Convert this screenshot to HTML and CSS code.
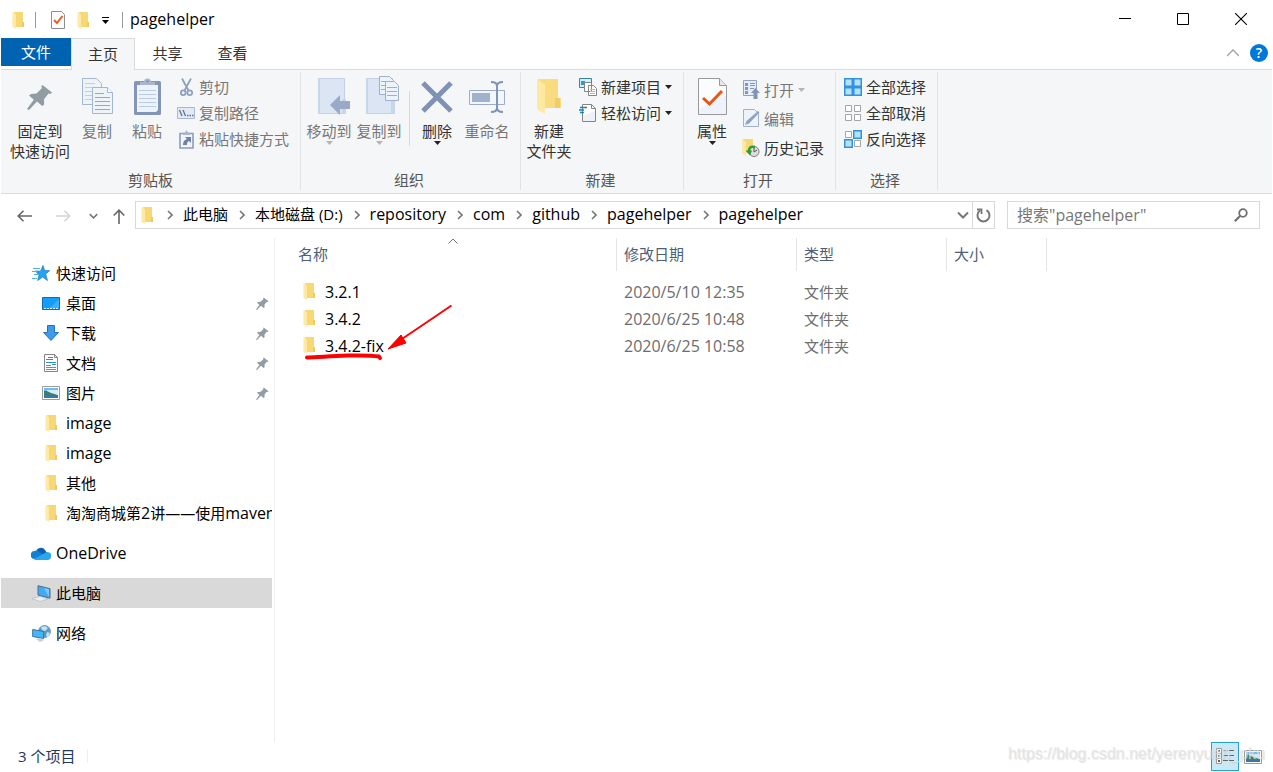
FILE: index.html
```html
<!DOCTYPE html>
<html lang="zh-CN">
<head>
<meta charset="utf-8">
<title>pagehelper</title>
<link rel="stylesheet" href="styles.css">
</head>
<body>
<svg class="defs" aria-hidden="true">
  <symbol id="folder" viewBox="0 0 12 17"><path fill="#f8d775" d="M2 0h9v10h1v5H3z"/><path fill="#f0c95f" d="M10 10h2v5h-2z"/><path fill="#ffe9a6" d="M0 0l4 2.500V17L0 14.500z"/><path fill="#fff3cc" d="M0 0h1v15l-1-.6z"/></symbol>
  <symbol id="pin" viewBox="0 0 26 26"><path fill="#919ca3" d="M15.500 1l9.500 7.500-1.500 1.500-2-.4-4.500 5.600.2 5.300-2 1.500-5.200-4.400L2 26l-2-1 6.800-9.200L2 11.600 4 10l5.500-.5 5.500-5.500-.8-1.500z"/></symbol>
  <symbol id="crumb" viewBox="0 0 6 10"><path fill="none" stroke="#777" stroke-width="1.600" d="M1 1l4 4-4 4"/></symbol>
  <symbol id="down" viewBox="0 0 12 8"><path fill="none" stroke="#777" stroke-width="2" d="M1 1.500l5 5 5-5"/></symbol>
  <symbol id="caret" viewBox="0 0 7 4"><path fill="currentColor" d="M0 0h7L3.500 4z"/></symbol>
  <symbol id="picture" viewBox="0 0 18 14"><path fill="#fff" stroke="#9b9b9b" d="M.5.5h17v13H.5z"/><path fill="#6fbdf0" d="M2 2h14v4H2z"/><path fill="#d4edf7" d="M5 4h11v4H5z"/><path fill="#3e7d6c" d="M2 5h3l4 2 7 2v1H2z"/><path fill="#3478ad" d="M2 9h14v3H2z"/></symbol>
</svg>

<header class="titlebar">
  <div class="quick">
    <svg class="i-folder"><use href="#folder"/></svg>
    <span class="bar"></span>
    <button class="plain q-check" aria-label="属性"><svg width="14" height="18" viewBox="0 0 14 18"><path fill="#fbfcfd" stroke="#8e8e8e" d="M.5.5h10l3 3v14H.5z"/><path fill="none" stroke="#f05a1d" stroke-width="2" d="M3 9l3 3 5.500-7"/></svg></button>
    <button class="plain" aria-label="新建文件夹"><svg class="i-folder"><use href="#folder"/></svg></button>
    <button class="plain q-more" aria-label="自定义"><svg width="7" height="7" viewBox="0 0 7 7"><path d="M0 0h7v1H0zM0 3h7L3.500 7z"/></svg></button>
    <span class="bar"></span>
  </div>
  <h1 class="title">pagehelper</h1>
  <div class="winctl">
    <button class="plain" aria-label="最小化"><svg width="12" height="12"><path d="M0 5h12v1H0z"/></svg></button>
    <button class="plain" aria-label="最大化"><svg width="12" height="12"><path fill="none" stroke="#000" d="M.5.5h11v11H.5z"/></svg></button>
    <button class="plain" aria-label="关闭"><svg width="12" height="12"><path fill="none" stroke="#000" stroke-width="1.100" d="M0 0l12 12M12 0L0 12"/></svg></button>
  </div>
</header>

<nav class="tabs">
  <button class="tab file">文件</button>
  <button class="tab active">主页</button>
  <button class="tab">共享</button>
  <button class="tab">查看</button>
  <div class="tabs-end">
    <button class="plain" aria-label="最小化功能区"><svg width="12" height="8"><path fill="none" stroke="#a0a0a0" stroke-width="1.300" d="M0 7l6-6 6 6"/></svg></button>
    <button class="plain help" aria-label="帮助">?</button>
  </div>
</nav>

<section class="ribbon">
  <div class="group g-clip">
    <div class="tools">
      <button class="big wide"><span class="pic"><svg width="26" height="26"><use href="#pin"/></svg></span>固定到<br>快速访问</button>
      <button class="big off"><span class="pic"><svg width="31" height="37" viewBox="0 0 31 37"><g fill="#eef3fa" stroke="#a4b6d3"><path d="M.5.5h14l5 5v21H.5z"/><path fill="none" stroke="#c1cfe5" d="M3 5.500h10M3 9.500h14M3 13.500h14M3 17.500h14M3 21.500h14"/><path d="M10.500 9.500h15l5 5v21h-20z"/><path fill="#fff" d="M25.500 9.500v5h5"/><path fill="none" stroke="#93a7c8" d="M13 15.500h9M13 19.500h15M13 23.500h15M13 27.500h15M13 31.500h15"/></g></svg></span>复制</button>
      <button class="big paste off"><span class="pic"><svg width="27" height="37" viewBox="0 0 27 37"><rect y="3" width="27" height="34" rx="1.500" fill="#8496b8"/><path fill="#edf3fa" d="M3 7h21v25l-2 2H3z"/><path stroke="#bccbe1" d="M5 12.500h17M5 16.500h17M5 20.500h17M5 24.500h17M5 28.500h17"/><path fill="#a9b6ce" d="M6 7V4h4a3.500 3.500 0 0 1 7 0h4v3z"/><circle cx="13.500" cy="3.500" r="1.300" fill="#8496b8"/></svg></span>粘贴</button>
      <div class="small">
        <button class="line off"><span class="ico"><svg width="13" height="19" viewBox="0 0 13 19"><g fill="none" stroke="#8ea0bf"><path stroke-width="1.800" d="M2 0.500l6.500 12M11 .5L4.500 12.500"/><circle cx="3.200" cy="14.800" r="2.400" stroke-width="1.800"/><circle cx="9.800" cy="14.800" r="2.400" stroke-width="1.800"/></g></svg></span>剪切</button>
        <button class="line off"><span class="ico"><svg width="18" height="12" viewBox="0 0 18 12"><path fill="#e2eaf5" stroke="#aab9d3" d="M.5.5h17v11H.5z"/><path fill="none" stroke="#5c7299" stroke-width="1.300" d="M2.500 3l2.500 6M6 3l2.500 6M10 8.500h1.500M12.500 8.500H14M15 8.500h1.500"/></svg></span>复制路径</button>
        <button class="line off"><span class="ico"><svg width="15" height="19" viewBox="0 0 15 19"><path fill="#f1f5fb" stroke="#8c9dbd" stroke-width="1.600" d="M1 3.500h13v14.500H1z"/><path fill="#a9b6ce" d="M4 5V2.500h2L7.500 0 9 2.500h2V5z"/><path fill="#6c82a9" d="M6 7h6v6l-2-2c-2 1-2 2-2 4H4c0-3 1-5 4-6z"/></svg></span>粘贴快捷方式</button>
      </div>
    </div>
    <div class="caption">剪贴板</div>
  </div>

  <div class="group g-org">
    <div class="tools">
      <button class="big off"><span class="pic shift"><svg width="34" height="37" viewBox="0 0 34 37"><path fill="#dbe5f3" stroke="#c3d1e6" d="M2.500.5h26v35h-26z"/><path fill="#c8d6e9" d="M2 0h2v36H2zM26 21h4v15h-4z"/><path fill="#98aac8" d="M14 27l10-10v6h10v8H24v6z"/></svg></span>移动到<svg class="caret"><use href="#caret"/></svg></button>
      <button class="big off"><span class="pic shift high"><svg width="34" height="39" viewBox="0 0 34 39"><path fill="#dbe5f3" stroke="#c3d1e6" d="M.5 2.500h26v35H.5z"/><path fill="#c8d6e9" d="M0 2h2v36H0zM25 25l4-2v15h-4z"/><g fill="#edf3fa" stroke="#9eb0ce"><path d="M13.500.5h10l4 4v14h-14z"/><path d="M19.500 5.500h9l4 4v15h-13z"/><path fill="none" d="M15 5.500h4M15 9.500h4M15 13.500h4M21 11.500h10M21 15.500h10M21 19.500h10"/></g></svg></span>复制到<svg class="caret"><use href="#caret"/></svg></button>
      <span class="split"></span>
      <button class="big"><span class="pic"><svg width="32" height="32" viewBox="0 0 32 32"><path fill="none" stroke="#8092b4" stroke-width="5" d="M2 2l28 28M30 2L2 30"/></svg></span>删除<svg class="caret"><use href="#caret"/></svg></button>
      <button class="big off"><span class="pic"><svg width="36" height="34" viewBox="0 0 36 34"><path fill="#f3f7fc" stroke="#9badca" d="M.5 10.500h35v14H.5z"/><path fill="#a1b2cd" d="M3 13h18v9H3z"/><path fill="none" stroke="#8193b6" stroke-width="2" d="M22 2c4 0 6 1 6 4v22c0 3-2 4-6 4M34 2c-4 0-6 1-6 4M34 32c-4 0-6-1-6-4"/></svg></span>重命名</button>
    </div>
    <div class="caption">组织</div>
  </div>

  <div class="group g-new">
    <div class="tools">
      <button class="big"><span class="pic"><svg width="24" height="35" viewBox="0 0 24 35"><path fill="#f9db80" d="M1 0h20v19h3v10H4z"/><path fill="#f1cc69" d="M18 19h5v10h-5z"/><path fill="#ffe89f" d="M0 0l8 5.500V35L0 30z"/></svg></span>新建<br>文件夹</button>
      <div class="small">
        <button class="line"><span class="ico"><svg width="18" height="18" viewBox="0 0 18 18"><path fill="#d4eefb" stroke="#38839d" d="M.5.5h12v9H.5z"/><path fill="#239ddd" d="M2 3h4v4H2z"/><path fill="#fff" stroke="#858585" d="M5.500 4.500h7v9h-7zM9.500 7.500h5l3 3v7h-8z"/><path stroke="#f2a296" d="M11 11.500h5M11 13.500h5M11 15.500h5"/></svg></span>新建项目<svg class="caret"><use href="#caret"/></svg></button>
        <button class="line"><span class="ico"><svg width="18" height="18" viewBox="0 0 18 18"><path fill="#fff" stroke="#858585" d="M3.500.5h9l4 4v13h-13z"/><path fill="#edf1f7" d="M4 12l11-5 1 1v9H4z"/><path fill="none" stroke="#858585" d="M12.500.5v4h4"/><path stroke="#1e83bd" stroke-width="1.500" d="M1 3.500h7M0 6h5M1 8.500h4"/></svg></span>轻松访问<svg class="caret"><use href="#caret"/></svg></button>
      </div>
    </div>
    <div class="caption">新建</div>
  </div>

  <div class="group g-open">
    <div class="tools">
      <button class="big"><span class="pic"><svg width="29" height="37" viewBox="0 0 29 37"><path fill="#fbfcfe" stroke="#999" d="M.5.5h21l7 7v29H.5z"/><path fill="#eef3fb" d="M1 31l27-14v19H1z"/><path fill="#e6e6e6" stroke="#999" d="M21.500.5v7h7"/><path fill="none" stroke="#ec5311" stroke-width="3" d="M5 20l6.500 6L24 13"/></svg></span>属性<svg class="caret"><use href="#caret"/></svg></button>
      <div class="small tall">
        <button class="line off"><span class="ico"><svg width="17" height="19" viewBox="0 0 17 19"><path fill="#e5ecf6" stroke="#91a3c2" d="M.5.5h13v15H.5z"/><path fill="#8297bb" d="M2 3h3v3H2zM2 7h3v3H2zM2 11h3v3H2zM7 3h5v1H7zM7 5h5v1H7zM7 8h4v1H7z"/><path fill="#7f94b8" d="M8 13l4.500-5 4.500 5h-2.500v6h-4v-6z"/></svg></span>打开<svg class="caret"><use href="#caret"/></svg></button>
        <button class="line off"><span class="ico"><svg width="17" height="19" viewBox="0 0 17 19"><path fill="#edf3fa" stroke="#a2b2cd" d="M.5.5h11l4 4v13H.5z"/><path fill="#8fa2c2" d="M2 16l1.500-4L15 2l1.500 1.500L6 14.500z"/></svg></span>编辑</button>
        <button class="line"><span class="ico"><svg width="18" height="18" viewBox="0 0 18 18"><path fill="#f8d775" d="M1 0h10v14H3z"/><path fill="#ffe9a6" d="M0 0l4 3v14l-4-3z"/><circle cx="12" cy="12.500" r="5" fill="#ddd" stroke="#7d7d7d"/><path fill="none" stroke="#555" d="M12 9v4l3-2"/><path fill="none" stroke="#2b9c37" stroke-width="2.600" d="M13 8c-5-1-6 1-6 5"/><path fill="#2b9c37" d="M3.500 11.500h6.500l-2 5z"/></svg></span>历史记录</button>
      </div>
    </div>
    <div class="caption">打开</div>
  </div>

  <div class="group g-select">
    <div class="tools">
      <div class="small">
        <button class="line"><span class="ico"><svg width="18" height="18" viewBox="0 0 18 18"><g fill="#b7e1fb" stroke="#2f93e0" stroke-width="1.500"><path d="M.75.75h7.500v7.500H.75zM9.750.75h7.500v7.500h-7.500zM.75 9.750h7.500v7.500H.75zM9.750 9.750h7.500v7.500h-7.500z"/></g></svg></span>全部选择</button>
        <button class="line"><span class="ico"><svg width="16" height="16" viewBox="0 0 16 16"><path fill="#fff" stroke="#a5a5a5" d="M.5.5h6v6h-6zM9.500.5h6v6h-6zM.5 9.500h6v6h-6zM9.500 9.500h6v6h-6z"/></svg></span>全部取消</button>
        <button class="line"><span class="ico"><svg width="18" height="18" viewBox="0 0 18 18"><path fill="#fff" stroke="#a5a5a5" d="M1.500 1.500h6v6h-6zM10.500 10.500h6v6h-6z"/><path fill="#b7e1fb" stroke="#2f93e0" stroke-width="1.500" d="M9.750.75h7.500v7.500h-7.500zM.75 9.750h7.500v7.500H.75z"/></svg></span>反向选择</button>
      </div>
    </div>
    <div class="caption">选择</div>
  </div>
</section>

<div class="navbar">
  <div class="arrows">
    <button class="plain" aria-label="后退"><svg width="15" height="12"><path fill="none" stroke="#666" stroke-width="1.600" d="M15 6H1M6.500 .7L1.200 6l5.300 5.300"/></svg></button>
    <button class="plain" aria-label="前进"><svg width="15" height="12"><path fill="none" stroke="#d5d5d5" stroke-width="1.600" d="M0 6h14M8.500.7L13.800 6l-5.300 5.300"/></svg></button>
    <button class="plain recent" aria-label="最近位置"><svg width="9" height="6"><use href="#down"/></svg></button>
    <button class="plain up" aria-label="向上"><svg width="12" height="15"><path fill="none" stroke="#666" stroke-width="1.600" d="M6 15V1M.7 6.500L6 1.200l5.300 5.300"/></svg></button>
  </div>
  <div class="address">
    <svg class="i-folder"><use href="#folder"/></svg>
    <svg class="crumb"><use href="#crumb"/></svg><a href="#">此电脑</a>
    <svg class="crumb"><use href="#crumb"/></svg><a href="#">本地磁盘 (D:)</a>
    <svg class="crumb"><use href="#crumb"/></svg><a class="latin" href="#">repository</a>
    <svg class="crumb"><use href="#crumb"/></svg><a class="latin" href="#">com</a>
    <svg class="crumb"><use href="#crumb"/></svg><a class="latin" href="#">github</a>
    <svg class="crumb"><use href="#crumb"/></svg><a class="latin" href="#">pagehelper</a>
    <svg class="crumb"><use href="#crumb"/></svg><a class="latin" href="#">pagehelper</a>
    <button class="plain history" aria-label="历史"><svg width="12" height="8"><use href="#down"/></svg></button>
    <button class="plain refresh" aria-label="刷新"><svg width="15" height="15" viewBox="0 0 15 15"><path fill="none" stroke="#777" stroke-width="2" d="M10.500 2.200A6 6 0 1 1 4 2.500"/><path fill="none" stroke="#777" stroke-width="1.800" d="M1 1.500h4.500V6"/></svg></button>
  </div>
  <div class="search">
    <input class="latin" type="search" aria-label="搜索" placeholder='搜索"pagehelper"'>
    <svg width="14" height="14" viewBox="0 0 14 14"><circle cx="9" cy="5" r="3.800" fill="none" stroke="#707070" stroke-width="1.800"/><path stroke="#707070" stroke-width="2.200" d="M6.300 7.700L.8 13.200"/></svg>
  </div>
</div>

<div class="content">
  <aside class="side">
    <a class="node" href="#"><span class="ico"><svg width="18" height="17" viewBox="0 0 18 17"><path fill="#27a2ef" stroke="#1779c0" stroke-width=".7" d="M11 .5l1.700 5 5 .2-4 3.300 1.800 6.500-5-3.500-4.800 3.500 1.300-5.500-3.500-4 5 .2z"/><path stroke="#4eb2ef" d="M1 3.500h7M0 6.500h5M2 9.500h5M0 13.500h5"/></svg></span>快速访问</a>
    <a class="node sub" href="#"><span class="ico"><svg width="18" height="13"><path fill="#159dfa" stroke="#0b6cbd" d="M.5.5h17v12H.5z"/><path fill="#3db0fd" d="M8 11l9-9v9z"/><path stroke="#d8f0ff" stroke-dasharray="2 1" d="M2 11.500h14"/></svg></span><span class="name">桌面</span><svg class="tack"><use href="#pin"/></svg></a>
    <a class="node sub" href="#"><span class="ico"><svg width="16" height="16"><path fill="#3f9bea" stroke="#2175c0" d="M4.500.5h7v7h4L8 15.500.5 7.500h4z"/></svg></span><span class="name">下载</span><svg class="tack"><use href="#pin"/></svg></a>
    <a class="node sub" href="#"><span class="ico"><svg width="14" height="18"><path fill="#fff" stroke="#858585" d="M.5.5h10l3 3v14H.5z"/><path fill="none" stroke="#858585" d="M10.500.5v3h3M2 11.500h5M2 13.500h10M2 15.500h10"/><path stroke="#2892d4" d="M4 3.500h5M2 5.500h7M2 8.500h10M8 10.500h4"/></svg></span><span class="name">文档</span><svg class="tack"><use href="#pin"/></svg></a>
    <a class="node sub" href="#"><span class="ico"><svg width="18" height="14"><use href="#picture"/></svg></span><span class="name">图片</span><svg class="tack"><use href="#pin"/></svg></a>
    <a class="node sub" href="#"><span class="ico"><svg class="i-folder"><use href="#folder"/></svg></span><span class="name latin">image</span></a>
    <a class="node sub" href="#"><span class="ico"><svg class="i-folder"><use href="#folder"/></svg></span><span class="name latin">image</span></a>
    <a class="node sub" href="#"><span class="ico"><svg class="i-folder"><use href="#folder"/></svg></span><span class="name">其他</span></a>
    <a class="node sub" href="#"><span class="ico"><svg class="i-folder"><use href="#folder"/></svg></span><span class="name">淘淘商城第<span class="latin">2</span>讲——使用<span class="latin">maven</span></span></a>
    <a class="node root latin" href="#"><span class="ico"><svg width="20" height="13" viewBox="0 0 20 13"><path fill="#0f5fb2" d="M5 5a5 5 0 0 1 9-2l2 3-8 3z"/><path fill="#1180d3" d="M4 12a4 4 0 0 1-.5-8c2-.6 4 0 5 1l5 4z"/><path fill="#28a8ea" d="M3 12l11-6a3.600 3.600 0 0 1 6 3.500A3.500 3.500 0 0 1 17 13H4z"/></svg></span>OneDrive</a>
    <a class="node root current" href="#"><span class="ico"><svg width="20" height="17" viewBox="0 0 20 17"><path fill="#42aaf3" stroke="#4b6d86" d="M7 .7l12 3v9.500L7 10z"/><path fill="#7bcaff" d="M13 3l5 1.200v8z"/><path fill="#e9eff2" stroke="#aab5bb" stroke-width=".6" d="M1 13.500l8-2 8 2.500-8 2.500z"/></svg></span>此电脑</a>
    <a class="node root" href="#"><span class="ico"><svg width="19" height="17" viewBox="0 0 19 17"><circle cx="12.500" cy="6.500" r="6" fill="#5d9bc6" stroke="#8099ab"/><path fill="#c5e2f2" d="M9 2l4-1 3 2-3 3-3-1zM15 7l3 1-2 4-2-1z"/><path fill="#43b5f8" stroke="#36749d" d="M.7 4.500l11 2v7l-11-2z"/><path fill="#c4d0d7" d="M4 14l4-1 4 2-4 2z"/></svg></span>网络</a>
  </aside>

  <main class="files">
    <table>
      <thead><tr><th class="c-name">名称<svg class="sort" width="10" height="6"><path fill="none" stroke="#777" d="M.5 5.500L5 1l4.500 4.500"/></svg></th><th class="c-date">修改日期</th><th class="c-type">类型</th><th class="c-size">大小</th></tr></thead>
      <tbody>
        <tr><td class="latin"><div class="entry"><svg class="i-folder"><use href="#folder"/></svg>3.2.1</div></td><td class="latin">2020/5/10 12:35</td><td>文件夹</td><td></td></tr>
        <tr><td class="latin"><div class="entry"><svg class="i-folder"><use href="#folder"/></svg>3.4.2</div></td><td class="latin">2020/6/25 10:48</td><td>文件夹</td><td></td></tr>
        <tr><td class="latin"><div class="entry marked"><svg class="i-folder"><use href="#folder"/></svg>3.4.2-fix<svg class="mark" width="150" height="60" viewBox="0 0 150 60"><path stroke="#f00" stroke-width="2" d="M147.500 2.500L98 36"/><path fill="#f00" d="M84 46l13-14 5 8z" stroke="#f00"/><path fill="none" stroke="#f00" stroke-width="4" stroke-linecap="round" stroke-linejoin="round" d="M3 54.500c10 0 22-1.500 40-2 14-.3 24-.3 32 1l1 1.500"/></svg></div></td><td class="latin">2020/6/25 10:58</td><td>文件夹</td><td></td></tr>
      </tbody>
    </table>
  </main>
</div>

<footer class="status">
  <span class="count">3 个项目</span>
  <div class="views">
    <button class="plain details" aria-label="详细信息"><svg width="19" height="17" viewBox="0 0 19 17"><path fill="#fff" stroke="#9b9b9b" d="M.5.5h5v5h-5zM.5 5.500h5v5h-5zM.5 10.500h5v5h-5z"/><path fill="#35566d" d="M2 2h2v2H2zM2 7h2v2H2z"/><path fill="#a34c21" d="M2 12h2v2H2z"/><path stroke="#666" d="M7 2.500h5M13 2.500h5M7 7.500h5M13 7.500h5M7 12.500h5M13 12.500h5"/></svg></button>
    <button class="plain" aria-label="大缩略图"><svg width="18" height="14"><use href="#picture"/></svg></button>
  </div>
  <span class="watermark">https://blog.csdn.net/yerenyuan_pku</span>
</footer>
</body>
</html>
```
FILE: styles.css
```css
* { box-sizing: border-box; }

body {
  margin: 0;
  padding: 0 1px;
  min-height: 100vh;
  display: flex;
  flex-direction: column;
  background: #fff;
  color: #000;
  font-family: "Open Sans", "Noto Sans CJK SC", sans-serif;
  font-size: 15px;
  line-height: 20px;
}

button, input {
  font: inherit;
  color: inherit;
  margin: 0;
  padding: 0;
  border: 0;
  background: none;
}

a { color: inherit; text-decoration: none; }
svg { display: block; flex: none; }
.defs { position: absolute; width: 0; height: 0; }
.plain { display: flex; align-items: center; justify-content: center; }
.i-folder { width: 12px; height: 17px; }
.latin { font-size: 16px; }

/* Title bar */
.titlebar { display: flex; align-items: center; height: 38px; padding: 0 2px 0 11px; }
.quick { display: flex; align-items: center; padding-top: 2px; }
.bar { width: 1px; height: 16px; margin-left: 11px; background: #9a9a9a; }
.q-check { margin: 0 12px 0 15px; }
.q-more { margin-left: 13px; }
.quick .bar:last-child { margin-left: 13px; }
.title { margin: 0 0 0 7px; font-size: 16px; font-weight: 400; }
.winctl { display: flex; margin-left: auto; }
.winctl button { width: 58px; height: 38px; }

/* Tabs */
.tabs { display: flex; height: 32px; border-bottom: 1px solid #dadbdc; }
.tab { width: 65px; height: 31px; padding-bottom: 2px; color: #333; }
.tab.file { width: 70px; height: 28px; padding: 0; background: #0063b1; color: #fff; }
.tab.active { width: 64px; height: 32px; border: 1px solid #dadbdc; border-bottom: 0; background: #f5f6f7; }
.tabs-end { display: flex; align-items: center; gap: 11px; margin-left: auto; padding: 0 4px 2px 0; }
.help { width: 18px; height: 18px; border-radius: 50%; background: #0078d7; color: #fff; font-size: 14px; font-weight: 600; }

/* Ribbon */
.ribbon { display: flex; padding: 2px 0 3px; background: #f5f6f7; border-bottom: 1px solid #dadbdc; }
.group { display: flex; flex-direction: column; height: 118px; border-right: 1px solid #e2e3e4; }
.g-clip { width: 300px; padding-left: 9px; }
.g-org { width: 220px; padding-left: 3px; }
.g-new { width: 163px; padding-left: 3px; }
.g-open { width: 152px; padding-left: 3px; }
.g-select { width: 102px; padding-left: 3px; }
.tools { display: flex; flex: 1; }
.caption { text-align: center; color: #555; height: 20px; padding-right: 6px; }
.g-clip .caption { padding-right: 9px; }
.big { display: flex; flex-direction: column; align-items: center; width: 50px; height: 89px; color: #333; white-space: nowrap; }
.big.wide { width: 60px; margin-right: 2px; }
.paste { margin-right: 2px; }
.pic { display: flex; align-items: center; height: 49px; }
.pic.shift { padding-left: 8px; }
.pic.high { padding-bottom: 2px; }
.caret { width: 7px; height: 4px; color: #222; }
.off { color: #777; }
.off .caret { color: #b5b5b5; }
.split { width: 1px; height: 55px; margin: 19px 2px 0 5px; background: #dadbdc; }
.small { display: flex; flex-direction: column; padding: 2px 0 0 4px; }
.g-clip .small { padding-left: 2px; }
.line { display: flex; align-items: center; height: 26px; color: #333; white-space: nowrap; }
.line.off { color: #777; }
.line .ico { display: flex; justify-content: center; width: 20px; margin-right: 3px; }
.line .caret { margin-left: 4px; }
.tall { padding-top: 3px; }
.tall .line { height: 29px; }

/* Navigation row */
.navbar { display: flex; align-items: center; gap: 12px; padding: 7px 12px 4px 0; }
.arrows { display: flex; align-items: center; width: 122px; padding: 2px 0 0 16px; }
.arrows button { margin-right: 24px; }
.arrows .recent { margin: 0 15px 0 -6px; }
.arrows .up { margin: 0; }
.address { display: flex; align-items: center; flex: 1; height: 28px; border: 1px solid #d9d9d9; padding-left: 5px; }
.address a { padding-bottom: 2px; }
.crumb { width: 6px; height: 10px; margin: 0 10px 0 11px; }
.address .i-folder + .crumb { margin-left: 14px; }
.history { margin-left: auto; width: 18px; }
.refresh { width: 22px; height: 26px; border-left: 1px solid #d9d9d9; }
.search { display: flex; align-items: center; width: 253px; height: 28px; padding: 0 11px 0 9px; border: 1px solid #d9d9d9; }
.search input { flex: 1; min-width: 0; outline: 0; }
.search input::placeholder { color: #767676; opacity: 1; }

/* Sidebar */
.content { display: flex; flex: 1; padding-top: 5px; }
.side { width: 274px; padding: 20px 2px 0 0; border-right: 1px solid #f0f0f0; }
.node { display: flex; align-items: center; height: 30px; padding-left: 30px; overflow: hidden; white-space: nowrap; }
.node .ico { display: flex; justify-content: center; flex: none; width: 20px; margin-right: 5px; }
.node.sub { padding-left: 40px; }
.name { flex: 1; overflow: hidden; }
.tack { width: 13px; height: 13px; margin-right: 3px; }
.root { margin-top: 10px; }
.current { background: #d9d9d9; }

/* File list */
.files { flex: 1; }
table { width: 772px; border-collapse: separate; border-spacing: 0; table-layout: fixed; }
th { position: relative; height: 33px; padding: 0 0 2px 7px; border-right: 1px solid #e5e5e5; color: #4c607a; font-weight: 400; text-align: left; }
.c-name { width: 342px; padding-left: 23px; }
.c-date { width: 180px; }
.c-type { width: 150px; }
.c-size { width: 100px; }
.sort { position: absolute; top: 0; left: 173px; }
tbody::before { content: ""; display: block; height: 8px; }
td { height: 27px; padding: 0 0 2px 7px; color: #6d6d6d; }
td:first-child { padding-left: 28px; color: #000; }
.entry { display: flex; align-items: center; gap: 10px; }
.marked { position: relative; }
.mark { position: absolute; left: 1px; top: -33px; }

/* Status bar */
.status { position: relative; display: flex; align-items: flex-start; height: 30px; color: #1e395b; }
.count { margin-top: 7px; padding: 0 12px 0 17px; border-right: 1px solid #eee; line-height: 14px; }
.views { display: flex; gap: 5px; margin-left: auto; padding-right: 10px; }
.details { width: 28px; height: 29px; border: 1px solid #26a0da; background: #cbe8f6; }
.watermark { position: absolute; right: 7px; top: 2px; color: rgba(225, 225, 225, 0.8); font-family: "Liberation Sans", sans-serif; font-size: 16px; text-shadow: 1px 1px 1px rgba(160, 160, 160, 0.25); }
```
